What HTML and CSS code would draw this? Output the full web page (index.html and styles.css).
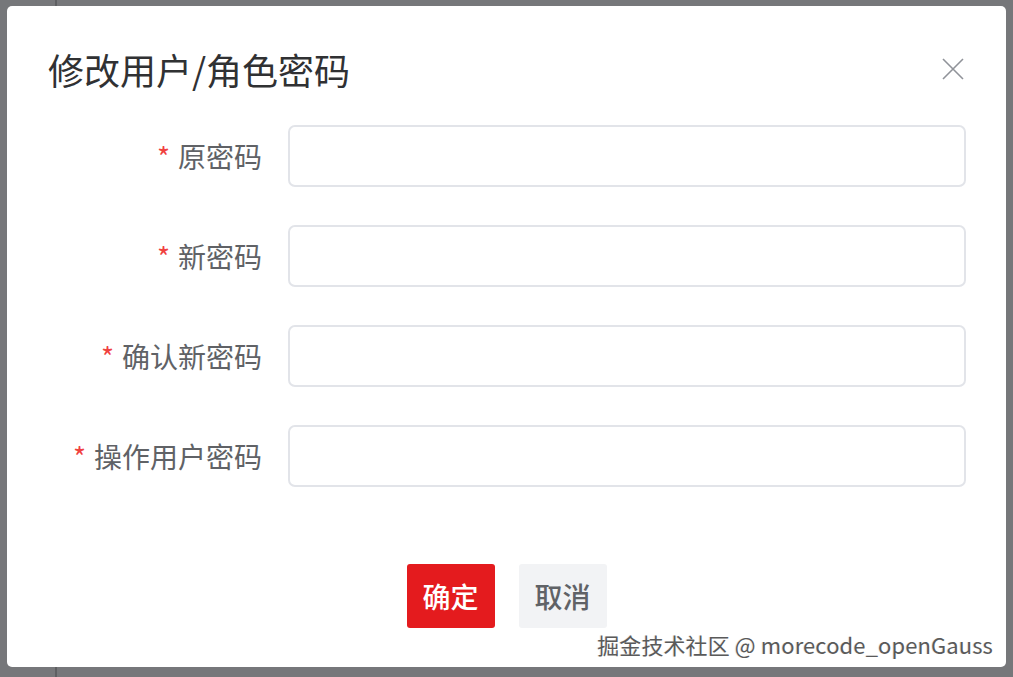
FILE: index.html
```html
<!DOCTYPE html>
<html lang="zh-CN">
<head>
<meta charset="utf-8">
<title>修改用户/角色密码</title>
<link rel="stylesheet" href="styles.css">
</head>
<body>
<div class="page">
  <div class="sidebar"></div>
  <div class="main"></div>
</div>
<div class="overlay">
  <div class="dialog">
    <div class="dialog-header">
      <span class="dialog-title">修改用户/角色密码</span>
      <button class="close-btn" aria-label="关闭">
        <svg width="22" height="22" viewBox="0 0 22 22"><path d="M1 1 L21 21 M21 1 L1 21" stroke="#909399" stroke-width="1.6" fill="none"/></svg>
      </button>
    </div>
    <div class="dialog-body">
      <div class="form-row">
        <label class="form-label"><span class="req">*</span>原密码</label>
        <input class="form-input" type="password">
      </div>
      <div class="form-row">
        <label class="form-label"><span class="req">*</span>新密码</label>
        <input class="form-input" type="password">
      </div>
      <div class="form-row">
        <label class="form-label"><span class="req">*</span>确认新密码</label>
        <input class="form-input" type="password">
      </div>
      <div class="form-row">
        <label class="form-label"><span class="req">*</span>操作用户密码</label>
        <input class="form-input" type="password">
      </div>
    </div>
    <div class="dialog-footer">
      <button class="btn btn-primary">确定</button>
      <button class="btn btn-default">取消</button>
    </div>
    <div class="watermark">掘金技术社区 @ morecode_openGauss</div>
  </div>
</div>
</body>
</html>
```

FILE: styles.css
```css
* { box-sizing: border-box; }
html, body {
  margin: 0;
  padding: 0;
  width: 1013px;
  height: 677px;
  overflow: hidden;
  background: #76777a;
  font-family: "Noto Sans CJK SC", "Noto Sans", sans-serif;
}
.page {
  display: flex;
  height: 677px;
}
.sidebar {
  width: 57px;
  border-right: 2px solid #5e5f62;
  height: 100%;
}
.main { flex: 1; }
.overlay {
  position: absolute;
  left: 0;
  top: 0;
  width: 1013px;
  height: 677px;
}
.dialog {
  position: absolute;
  left: 7px;
  top: 6px;
  width: 999px;
  height: 661px;
  background: #ffffff;
  border-radius: 5px;
  padding: 40px 40px 39px 40px;
  display: flex;
  flex-direction: column;
}
.dialog-header {
  height: 48px;
  display: flex;
  align-items: center;
  justify-content: space-between;
}
.dialog-title {
  font-size: 36px;
  line-height: 48px;
  color: #303133;
  padding-left: 1px;
  margin-top: -3px;
}
.close-btn {
  border: none;
  background: none;
  padding: 0;
  width: 22px;
  height: 22px;
  margin-right: 2px;
  margin-top: -2px;
  display: flex;
  align-items: center;
  justify-content: center;
  cursor: pointer;
}
.dialog-body {
  padding-top: 31px;
  display: flex;
  flex-direction: column;
  gap: 38px;
}
.form-row {
  display: flex;
  align-items: center;
  height: 62px;
}
.form-label {
  width: 241px;
  padding-right: 26px;
  text-align: right;
  font-size: 28px;
  line-height: 40px;
  color: #606266;
  flex-shrink: 0;
}
.req {
  color: #f0413f;
  margin-right: 8px;
}
.form-input {
  flex: 1;
  height: 62px;
  border: 2px solid #e2e4e9;
  border-radius: 7px;
  background: #fff;
  outline: none;
}
.dialog-footer {
  margin-top: 77px;
  display: flex;
  justify-content: center;
  gap: 24px;
}
.btn {
  width: 88px;
  height: 64px;
  border: none;
  border-radius: 3px;
  font-family: "Noto Sans CJK SC", sans-serif;
  font-size: 28px;
  font-weight: 500;
  padding: 0;
  cursor: pointer;
}
.btn-primary {
  background: #e41b1e;
  color: #ffffff;
}
.btn-default {
  background: #f2f3f5;
  color: #606266;
}
.watermark {
  position: absolute;
  right: 13px;
  bottom: 8px;
  font-size: 22px;
  line-height: 30px;
  color: #5a5a5a;
  text-shadow: 1px 1px 0 #ffffff, -1px 0 0 #e8e8e8;
  white-space: nowrap;
  letter-spacing: 0.1px;
}
```
